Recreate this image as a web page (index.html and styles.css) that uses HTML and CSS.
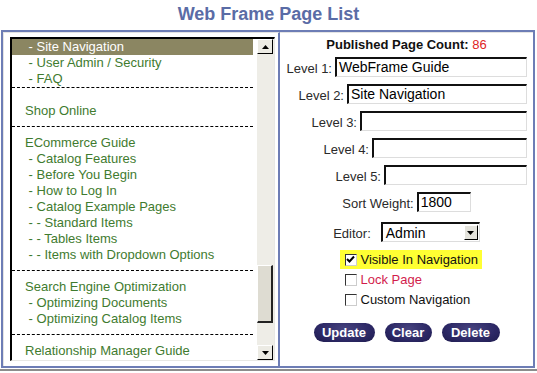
FILE: index.html
```html
<!DOCTYPE html>
<html lang="en">
<head>
  <meta charset="UTF-8" />
  <title>Web Frame Page List</title>
  <link rel="stylesheet" href="styles.css">
</head>
<body>
  <h1 class="page-title">Web Frame Page List</h1>

  <div class="frame">
    <!-- lista pagine -->
    <div class="list-pane">
      <div class="listbox">
        <div class="list-items">
          <div class="group first">
            <div class="item selected"> - Site Navigation</div>
            <div class="item"> - User Admin / Security</div>
            <div class="item"> - FAQ</div>
          </div>
          <div class="group shop">
            <div class="item">Shop Online</div>
          </div>
          <div class="group">
            <div class="item">ECommerce Guide</div>
            <div class="item"> - Catalog Features</div>
            <div class="item"> - Before You Begin</div>
            <div class="item"> - How to Log In</div>
            <div class="item"> - Catalog Example Pages</div>
            <div class="item"> - - Standard Items</div>
            <div class="item"> - - Tables Items</div>
            <div class="item"> - - Items with Dropdown Options</div>
          </div>
          <div class="group">
            <div class="item">Search Engine Optimization</div>
            <div class="item"> - Optimizing Documents</div>
            <div class="item"> - Optimizing Catalog Items</div>
          </div>
          <div class="group last">
            <div class="item">Relationship Manager Guide</div>
          </div>
        </div>
        <div class="scrollbar">
          <div class="scroll-btn">
            <svg width="7" height="4" viewBox="0 0 7 4"><path d="M3.5 0 L7 4 L0 4 Z" fill="#000"/></svg>
          </div>
          <div class="scroll-track">
            <div class="scroll-thumb"></div>
          </div>
          <div class="scroll-btn">
            <svg width="7" height="4" viewBox="0 0 7 4"><path d="M0 0 L7 0 L3.5 4 Z" fill="#000"/></svg>
          </div>
        </div>
      </div>
    </div>

    <!-- modulo pagina -->
    <div class="form-pane">
      <div class="count">Published Page Count: <span class="count-num">86</span></div>

      <div class="level-row">
        <label>Level 1:</label>
        <div class="field w1">WebFrame Guide</div>
      </div>
      <div class="level-row">
        <label>Level 2:</label>
        <div class="field w2">Site Navigation</div>
      </div>
      <div class="level-row">
        <label>Level 3:</label>
        <div class="field w3"></div>
      </div>
      <div class="level-row">
        <label>Level 4:</label>
        <div class="field w4"></div>
      </div>
      <div class="level-row">
        <label>Level 5:</label>
        <div class="field w5"></div>
      </div>

      <div class="center-row sort-row">
        <label>Sort Weight:</label>
        <div class="field w-sort">1800</div>
      </div>

      <div class="center-row editor-row">
        <label>Editor:</label>
        <div class="select">
          <span class="select-text">Admin</span>
          <span class="select-btn">
            <svg width="7" height="4" viewBox="0 0 7 4"><path d="M0 0 L7 0 L3.5 4 Z" fill="#000"/></svg>
          </span>
        </div>
      </div>

      <div class="checks">
        <div class="check-row highlight">
          <span class="checkbox">
            <svg width="9" height="9" viewBox="0 0 9 9"><path d="M1 4 L3.5 6.5 L8 1.5" stroke="#000" stroke-width="2" fill="none"/></svg>
          </span>
          <span>Visible In Navigation</span>
        </div>
        <div class="check-row lock">
          <span class="checkbox"></span>
          <span>Lock Page</span>
        </div>
        <div class="check-row">
          <span class="checkbox"></span>
          <span>Custom Navigation</span>
        </div>
      </div>

      <div class="buttons">
        <button class="pill b-update">Update</button>
        <button class="pill b-clear">Clear</button>
        <button class="pill b-delete">Delete</button>
      </div>
    </div>
  </div>
  <div class="bottom-line"></div>
</body>
</html>
```

FILE: styles.css
```css
/* base */
body {
  margin: 0;
  padding: 0;
  background: #fff;
  color: #222;
  font-family: "Liberation Sans", Arial, sans-serif;
  font-size: 13px;
}

.page-title {
  margin: 0;
  height: 30px;
  line-height: 28px;
  text-align: center;
  font-size: 18px;
  font-weight: bold;
  color: #5a6ca6;
}

/* cornice esterna */
.frame {
  margin: 0 2px 0 1px;
  height: 334px;
  border: 2px solid #6d7db5;
  display: grid;
  grid-template-columns: 277px 1fr;
}

.list-pane {
  border-right: 2px solid #6d7db5;
  border-top: 1px solid #e4e4e4;
  border-left: 1px solid #e4e4e4;
  padding: 4px 0 0 6px;
}

/* lista */
.listbox {
  width: 262px;
  height: 321px;
  display: flex;
  border-top: 2px solid #000;
  border-left: 2px solid #000;
  border-right: 1px solid #e8e8e4;
  border-bottom: 1px solid #e8e8e4;
  overflow: hidden;
}

.list-items {
  flex: 1;
  overflow: hidden;
  padding-right: 4px;
}

.group {
  padding: 8px 0 7px;
  border-bottom: 1px dashed #000;
}

.group.first {
  padding: 0;
}

.group.shop {
  padding-top: 15px;
  padding-bottom: 7px;
}

.group.last {
  border-bottom: none;
  padding-bottom: 0;
}

.item {
  height: 16px;
  line-height: 16px;
  padding-left: 13px;
  white-space: pre;
  color: #3f7b2f;
}

.item.selected {
  background: #8b8662;
  color: #fff;
}

/* barra di scorrimento */
.scrollbar {
  width: 17px;
  background: #eeede7;
  display: flex;
  flex-direction: column;
}

.scroll-btn {
  height: 15px;
  margin: 0 1px 0 0;
  box-sizing: border-box;
  background: #ecebe4;
  border-top: 1px solid #fff;
  border-left: 1px solid #fff;
  border-right: 1px solid #000;
  border-bottom: 1px solid #000;
  display: flex;
  align-items: center;
  justify-content: center;
}

.scroll-track {
  flex: 1;
  position: relative;
}

.scroll-thumb {
  position: absolute;
  left: 0;
  right: 1px;
  top: 211px;
  height: 58px;
  background: #dedcd2;
  border-top: 1px solid #fff;
  border-left: 1px solid #fff;
  border-right: 2px solid #222;
  border-bottom: 2px solid #222;
  box-sizing: border-box;
}

/* modulo */
.form-pane {
  display: flex;
  flex-direction: column;
  align-items: center;
  border-top: 1px solid #e4e4e4;
}

.count {
  margin-top: 4px;
  height: 16px;
  line-height: 16px;
  font-weight: bold;
  color: #111;
}

.count-num {
  color: #e0231f;
  font-weight: normal;
}

.level-row {
  align-self: stretch;
  display: flex;
  justify-content: flex-end;
  align-items: center;
  gap: 3px;
  padding-right: 6px;
  margin-top: 4px;
  height: 20px;
}

.level-row + .level-row {
  margin-top: 7px;
}

.level-row label,
.center-row label {
  color: #2a2a2a;
  padding-top: 3px;
}

.field {
  height: 20px;
  box-sizing: border-box;
  border-top: 2px solid #111;
  border-left: 2px solid #111;
  border-right: 1px solid #ddd;
  border-bottom: 1px solid #ddd;
  background: #fff;
  font-size: 14px;
  line-height: 17px;
  padding-left: 2px;
  color: #000;
}

.w1 { width: 192px; }
.w2 { width: 180px; }
.w3 { width: 167px; }
.w4 { width: 155px; }
.w5 { width: 143px; }
.w-sort { width: 54px; }

.center-row {
  display: flex;
  align-items: center;
  gap: 3px;
  height: 20px;
}

.sort-row {
  margin-top: 7px;
}

.editor-row {
  margin-top: 10px;
  gap: 10px;
}

.select {
  width: 99px;
  height: 20px;
  box-sizing: border-box;
  border-top: 2px solid #111;
  border-left: 2px solid #111;
  border-right: 1px solid #ddd;
  border-bottom: 1px solid #ddd;
  display: flex;
  align-items: center;
}

.select-text {
  flex: 1;
  padding-left: 3px;
  font-size: 14px;
  color: #000;
}

.select-btn {
  width: 14px;
  height: 15px;
  margin-right: 1px;
  box-sizing: border-box;
  background: #e4e3dc;
  border-top: 1px solid #fff;
  border-left: 1px solid #fff;
  border-right: 1px solid #000;
  border-bottom: 1px solid #000;
  display: flex;
  align-items: center;
  justify-content: center;
}

/* caselle di spunta */
.checks {
  margin-top: 8px;
  display: flex;
  flex-direction: column;
  align-items: flex-start;
  width: 142px;
  margin-left: 8px;
}

.check-row {
  display: flex;
  align-items: center;
  gap: 4px;
  height: 19px;
  padding-left: 5px;
  font-size: 13px;
  color: #111;
}

.check-row.highlight {
  background: #ffff33;
  width: 142px;
  box-sizing: border-box;
}

.check-row.lock {
  color: #d21c4c;
  height: 21px;
}

.checkbox {
  width: 12px;
  height: 12px;
  box-sizing: border-box;
  border-top: 1px solid #333;
  border-left: 1px solid #333;
  border-right: 1px solid #ccc;
  border-bottom: 1px solid #ccc;
  background: #fff;
  display: flex;
  align-items: center;
  justify-content: center;
}

/* pulsanti */
.buttons {
  margin-top: 14px;
  display: flex;
  gap: 10px;
}

.pill {
  height: 19px;
  padding: 0;
  border: none;
  border-radius: 10px;
  background: radial-gradient(ellipse at 50% 30%, #47437f 0%, #2c2865 60%, #1e1b4d 100%);
  color: #fff;
  font-family: "Liberation Sans", Arial, sans-serif;
  font-size: 13px;
  font-weight: bold;
  cursor: pointer;
}

.b-update { width: 61px; }
.b-clear { width: 47px; }
.b-delete { width: 58px; }

.bottom-line {
  margin-top: 1px;
  border-top: 2px solid #8c8c8c;
}
```
